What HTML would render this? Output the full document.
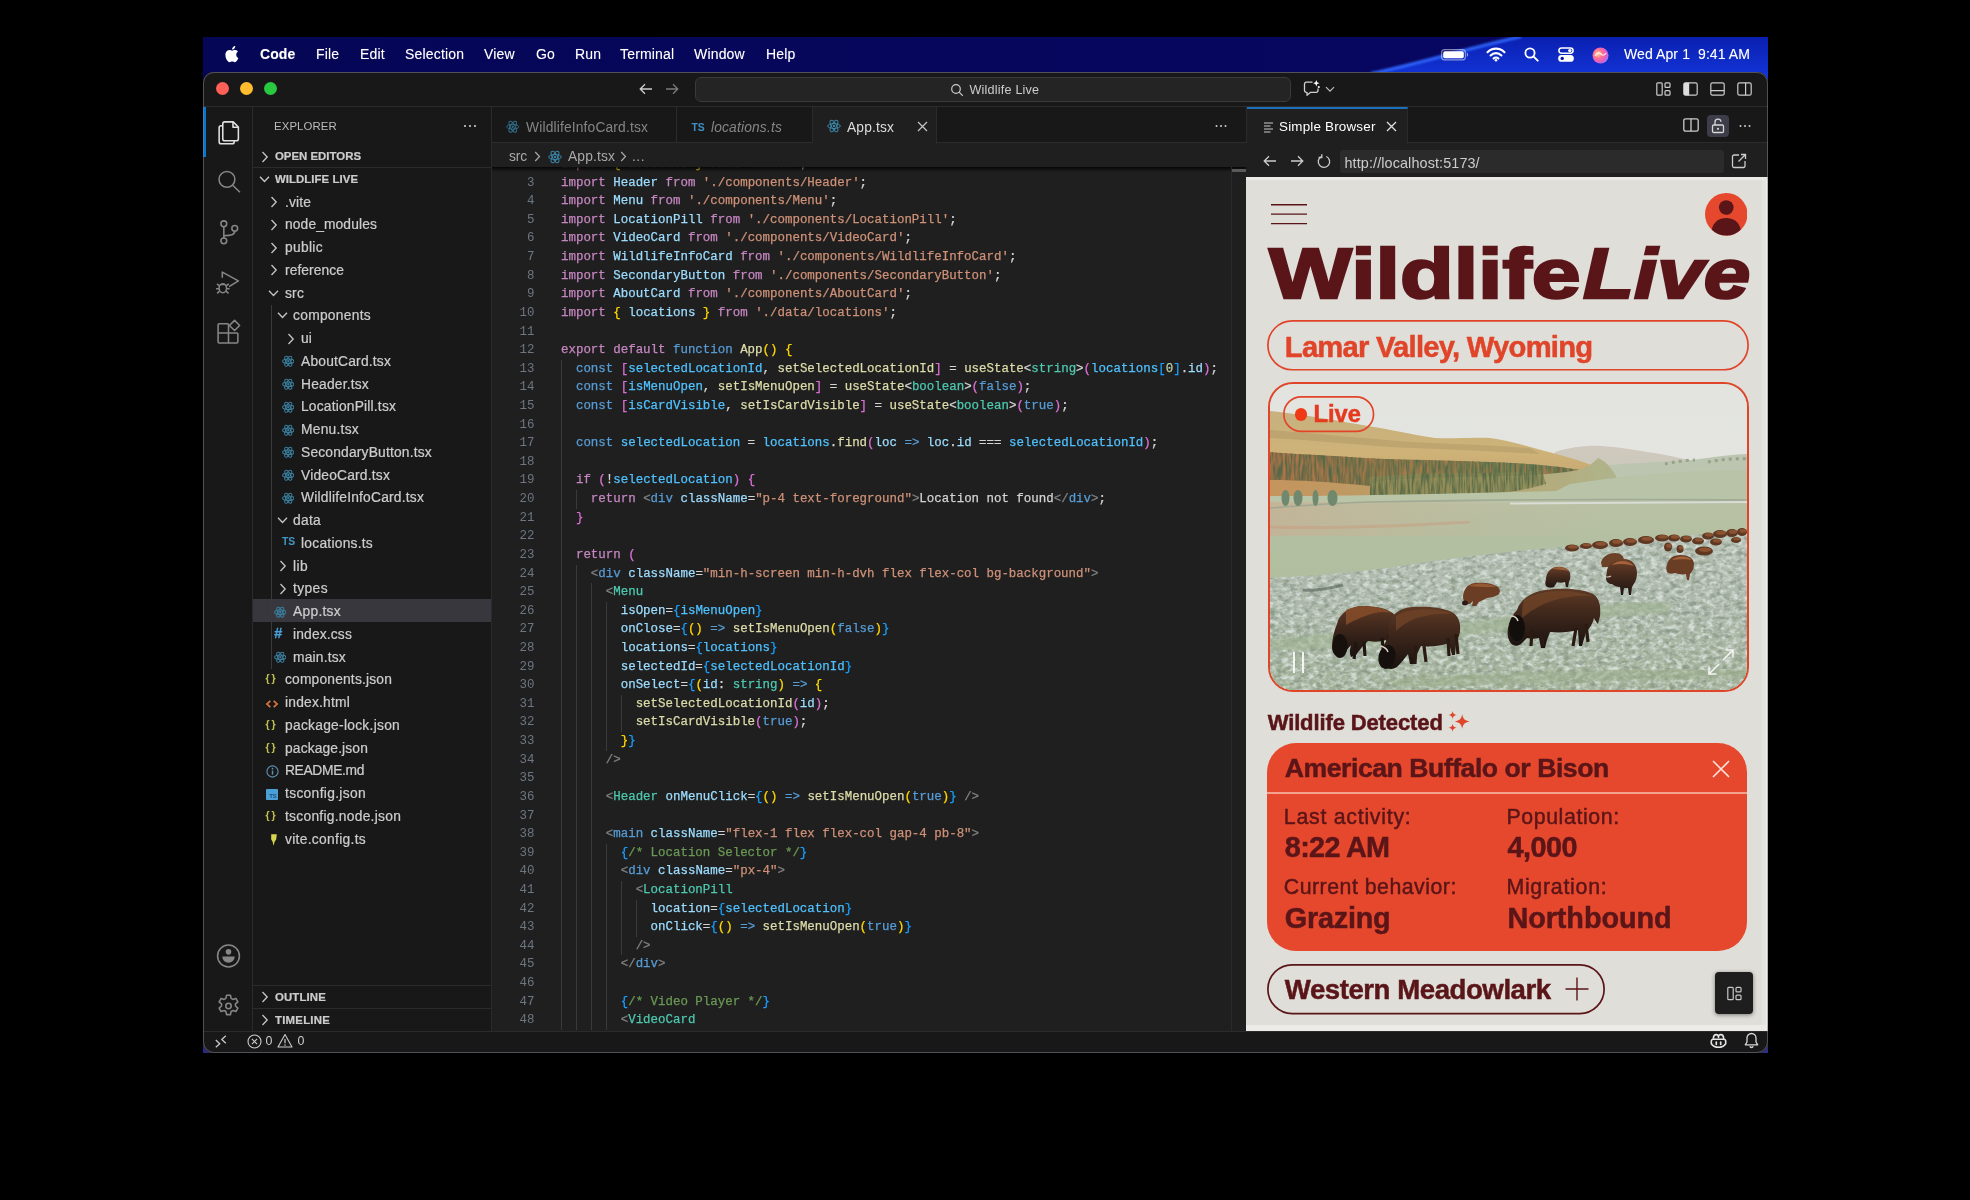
<!DOCTYPE html>
<html lang="en">
<head>
<meta charset="utf-8">
<title>Wildlife Live — Visual Studio Code</title>
<style>
*{box-sizing:border-box;margin:0;padding:0}
html,body{width:1970px;height:1200px;background:#000;overflow:hidden}
body{font-family:"Liberation Sans",sans-serif;color:#ccc;position:relative}
.abs{position:absolute}
#screen{position:absolute;left:203px;top:37px;width:1565px;height:1016px;overflow:hidden;background:linear-gradient(90deg,#060658 0,#060658 72%,#1230cc 86%,#1535d8 100%);will-change:transform}
/* ---------- mac menu bar ---------- */
#menubar{position:absolute;left:0;top:0;width:1565px;height:36px;background:#06064f;color:#fff;font-size:14px;letter-spacing:0}
#menubar span.mi{position:absolute;top:8.5px;line-height:17px;white-space:nowrap;letter-spacing:.18px;text-shadow:0 0 1px rgba(255,255,255,.35)}
#menubar svg{position:absolute}
/* ---------- window ---------- */
#win{position:absolute;left:0;top:35px;width:1565px;height:981px;background:#1f1f1f;border-radius:11px;overflow:hidden;
 box-shadow:0 0 0 1px rgba(120,120,130,.55) inset}
#winborder{position:absolute;left:0;top:35px;width:1565px;height:981px;border-radius:11px;border:1px solid rgba(130,130,140,.55);pointer-events:none;z-index:50}
#titlebar{position:absolute;left:0;top:0;width:1565px;height:35px;background:#181818;border-bottom:1px solid #2b2b2b}
.tl{position:absolute;top:10px;width:13px;height:13px;border-radius:50%}
#cmd{position:absolute;left:491.5px;top:5px;width:596px;height:24.5px;border-radius:6px;background:#242424;border:1px solid #3a3a3a}
#cmd span{position:absolute;left:274px;top:4.500px;font-size:12.600px;letter-spacing:.2px;line-height:15px;color:#ccc;white-space:nowrap}
#titlebar svg{position:absolute}
/* ---------- activity bar ---------- */
#act{position:absolute;left:0;top:35px;width:50px;height:925px;background:#181818;border-right:1px solid #2b2b2b}
#act svg{position:absolute;left:13px}
#act .ind{position:absolute;left:0;top:0;width:2.5px;height:50px;background:#0078d4}
/* ---------- sidebar ---------- */
#side{position:absolute;left:50px;top:35px;width:239px;height:925px;background:#181818;border-right:1px solid #2b2b2b;font-size:13.8px;color:#ccc;overflow:hidden}
#side .hdr{position:absolute;left:21px;top:12px;font-size:11.4px;line-height:14px;color:#bbb;letter-spacing:.1px}
#side .row{position:absolute;left:0;width:238px;height:22.75px;line-height:22.75px;white-space:nowrap}
#side .row span.t{position:absolute;top:1px;-webkit-text-stroke:.22px}
#side .row svg{position:absolute}
#side .sec{font-weight:bold;font-size:11.4px;color:#ccc;letter-spacing:.1px}
#side .row.sec span.t{top:.2px}
#side .sel{background:#37373d}
#side .guide{position:absolute;width:1px;background:#3a3a3a}
.ico-ts{position:absolute;font-size:10.400px;font-weight:bold;color:#4a9fd8;letter-spacing:-.2px}
/* ---------- editor ---------- */
#ed{position:absolute;left:289px;top:35px;width:754px;height:925px;background:#1f1f1f;overflow:hidden}
#tabs{position:absolute;left:0;top:0;width:754px;height:36px;background:#181818;border-bottom:1px solid #2b2b2b}
.tab{position:absolute;top:0;height:36px;border-right:1px solid #2b2b2b;font-size:13.8px;line-height:42px;color:#858585;white-space:nowrap}
.tab.on{background:#1f1f1f;color:#ddd;height:37px}
.tab span.t{position:absolute;top:0}
.tab svg{position:absolute}
#crumbs{position:absolute;left:0;top:36px;width:754px;height:24px;font-size:13.8px;line-height:24px;color:#a9a9a9}
#crumbs span,#crumbs svg{position:absolute;white-space:nowrap}
#code{position:absolute;left:0;top:60px;width:754px;height:865px;overflow:hidden;font-family:"Liberation Mono",monospace;font-size:12.44px;line-height:18.615px;color:#d4d4d4}
#code .ln{position:absolute;left:0;width:754px;height:18.6px;white-space:pre}
#code .ln i{position:absolute;left:0;width:42.5px;text-align:right;color:#6e7681;font-style:normal}
#code .ln b{position:absolute;left:69px;font-weight:normal;-webkit-text-stroke:.25px}
#code .g{position:absolute;width:1px;background:#3a3a3a}
.k{color:#c586c0}.c{color:#569cd6}.v{color:#9cdcfe}.f{color:#dcdcaa}.s{color:#ce9178}.ty{color:#4ec9b0}.m{color:#6a9955}
.b1{color:#ffd700}.b2{color:#da70d6}.b3{color:#179fff}.p{color:#808080}.n{color:#b5cea8}.w{color:#d4d4d4}.q{color:#4fc1ff}
/* ---------- browser ---------- */
#br{position:absolute;left:1043px;top:35px;width:522px;height:925px;background:#1f1f1f;overflow:hidden}
#brtabs{position:absolute;left:0;top:0;width:522px;height:36px;background:#181818;border-bottom:1px solid #2b2b2b;border-left:1px solid #2b2b2b}
#brtab{position:absolute;left:0;top:0;width:161px;height:37px;background:#1f1f1f;border-top:2px solid #1a70bb;border-right:1px solid #2b2b2b;font-size:13.4px;color:#fff}
#brtabs svg,#brnav svg{position:absolute}
#brnav{position:absolute;left:0;top:37px;width:522px;height:34px;background:#1f1f1f}
#url{position:absolute;left:94px;top:6px;width:383.500px;height:22.500px;background:#2b2b2b;border-radius:2px;font-size:14.4px;line-height:26px;color:#ccc;padding-left:4.500px;white-space:nowrap}
#page{position:absolute;left:0;top:70px;width:522px;height:854px;background:#dfded9;overflow:hidden;color:#5a1517}
/* ---------- status ---------- */
#status{position:absolute;left:0;top:958.800px;width:1565px;height:22.200px;background:#181818;border-top:1px solid #2b2b2b;font-size:12.4px;color:#ccc}
#status svg,#status span{position:absolute}
</style>
</head>
<body>
<div id="screen">
<div id="menubar">
 <svg style="left:0;top:0" width="1565" height="36" viewBox="0 0 1565 36"><defs><linearGradient id="mbg" x1="0" y1="0" x2="0" y2="1"><stop offset="0" stop-color="#0a1fb0"/><stop offset="1" stop-color="#1233d4"/></linearGradient><linearGradient id="mbl" x1="0" y1="0" x2="1" y2="0"><stop offset="0" stop-color="#060656"/><stop offset="1" stop-color="#070764"/></linearGradient><filter id="mbb"><feGaussianBlur stdDeviation="1.200"/></filter></defs><rect width="1565" height="36" fill="url(#mbl)"/><path d="M1172 36C1215 27 1262 12 1318 0H1565V36z" fill="url(#mbg)"/><path d="M1168 36.500C1215 27 1262 12 1318 -.5" fill="none" stroke="#2f66ff" stroke-width="3" filter="url(#mbb)"/></svg>
 <svg style="left:21px;top:8px" width="15" height="18" viewBox="0 0 15 18"><path fill="#fff" d="M12.3 9.6c0-2 1.6-2.9 1.7-3-0.9-1.4-2.4-1.6-2.9-1.6-1.2-.1-2.4.7-3 .7-.6 0-1.6-.7-2.6-.7C4.100 5 2.800 5.800 2.100 7 .7 9.500 1.700 13.200 3.100 15.200c.7 1 1.500 2.100 2.500 2 1-.04 1.400-.65 2.600-.65s1.600.65 2.600.63c1.100-.02 1.800-1 2.400-2 .8-1.100 1.100-2.200 1.100-2.300-.02-.01-2.100-.8-2.100-3.200zM10.400 3.500c.55-.67.92-1.600.82-2.500-.8.03-1.750.53-2.300 1.200-.5.600-.95 1.500-.83 2.400.88.070 1.770-.450 2.310-1.100z"/></svg>
 <span class="mi" style="left:57px;font-weight:bold;letter-spacing:.1px">Code</span>
 <span class="mi" style="left:113px">File</span>
 <span class="mi" style="left:157px">Edit</span>
 <span class="mi" style="left:202px">Selection</span>
 <span class="mi" style="left:281px">View</span>
 <span class="mi" style="left:333px">Go</span>
 <span class="mi" style="left:372px">Run</span>
 <span class="mi" style="left:417px">Terminal</span>
 <span class="mi" style="left:491px">Window</span>
 <span class="mi" style="left:563px">Help</span>
 <!-- battery -->
 <svg style="left:1237.500px;top:12px" width="28" height="12" viewBox="0 0 28 12"><rect x=".6" y=".6" width="23.800" height="10.300" rx="3" fill="none" stroke="#fff" stroke-opacity=".5" stroke-width="1.100"/><rect x="2.200" y="2.200" width="20.600" height="7.100" rx="1.700" fill="#fff"/><path d="M25.800 3.800v4c.8-.3 1.400-1.100 1.400-2s-.6-1.700-1.400-2z" fill="#fff" fill-opacity=".55"/></svg>
 <!-- wifi -->
 <svg style="left:1283px;top:10px" width="20" height="15" viewBox="0 0 20 15"><g fill="none" stroke="#fff" stroke-linecap="round"><path d="M1.500 5.200a12 12 0 0 1 17 0" stroke-width="2.100"/><path d="M4.600 8.400a7.600 7.600 0 0 1 10.800 0" stroke-width="2.100"/><path d="M7.600 11.500a3.400 3.400 0 0 1 4.800 0" stroke-width="2.100"/></g><circle cx="10" cy="13.300" r="1.300" fill="#fff"/></svg>
 <!-- search -->
 <svg style="left:1321px;top:10px" width="15" height="15" viewBox="0 0 15 15"><circle cx="6" cy="6" r="4.600" fill="none" stroke="#fff" stroke-width="1.800"/><path d="M9.400 9.400l4.300 4.300" stroke="#fff" stroke-width="1.900" stroke-linecap="round"/></svg>
 <!-- control center -->
 <svg style="left:1355px;top:10px" width="16" height="15" viewBox="0 0 16 15"><rect x=".9" y=".9" width="14.200" height="5.400" rx="2.700" fill="none" stroke="#fff" stroke-width="1.500"/><circle cx="11.800" cy="3.600" r="1.700" fill="#fff"/><rect x=".9" y="8.700" width="14.200" height="5.400" rx="2.700" fill="#fff" stroke="#fff" stroke-width="1.500"/><circle cx="4.200" cy="11.400" r="1.700" fill="#0a12a0"/></svg>
 <!-- siri -->
 <svg style="left:1389px;top:9.500px" width="17" height="17" viewBox="0 0 17 17"><defs><radialGradient id="siri" cx=".35" cy=".4" r=".8"><stop offset="0" stop-color="#ffd7a0"/><stop offset=".35" stop-color="#ff6f8e"/><stop offset=".7" stop-color="#d95bd6"/><stop offset="1" stop-color="#5fb7ff"/></radialGradient></defs><circle cx="8.500" cy="8.500" r="8" fill="url(#siri)"/><path d="M3 9c2-3 4-4 6-2s4 1 5-1" fill="none" stroke="#fff" stroke-opacity=".8" stroke-width="1.300"/></svg>
 <span class="mi" style="left:1421px;letter-spacing:.1px">Wed Apr 1&nbsp; 9:41 AM</span>
</div>
<div class="abs" style="left:0;top:1000px;width:14px;height:16px;background:#2a2a78"></div><div class="abs" style="left:1551px;top:1000px;width:14px;height:16px;background:#2f2f80"></div>
<div id="win">
<div id="titlebar">
 <div class="tl" style="left:13px;background:#fe5f57"></div>
 <div class="tl" style="left:36.800px;background:#febc2e"></div>
 <div class="tl" style="left:60.500px;background:#28c840"></div>
 <svg style="left:436px;top:11px" width="14" height="12" viewBox="0 0 14 12"><path d="M13 6H1.500M6 1.200L1.200 6 6 10.800" fill="none" stroke="#ccc" stroke-width="1.300"/></svg>
 <svg style="left:462px;top:11px" width="14" height="12" viewBox="0 0 14 12"><path d="M1 6h11.500M8 1.200L12.800 6 8 10.800" fill="none" stroke="#7a7a7a" stroke-width="1.300"/></svg>
 <div id="cmd">
  <svg style="left:254px;top:4.500px" width="14" height="14" viewBox="0 0 14 14"><circle cx="6" cy="6" r="4.300" fill="none" stroke="#ccc" stroke-width="1.200"/><path d="M9.200 9.200l3.600 3.600" stroke="#ccc" stroke-width="1.200"/></svg>
  <span>Wildlife Live</span>
 </div>
 <!-- copilot chat -->
 <svg style="left:1100px;top:8px" width="19" height="17" viewBox="0 0 19 17"><path d="M9.500 2.200H3.300A1.800 1.800 0 0 0 1.500 4v6.500a1.800 1.800 0 0 0 1.800 1.800H4v3l3.600-3h5.600a1.800 1.800 0 0 0 1.800-1.800V8.500" fill="none" stroke="#d0d0d0" stroke-width="1.300" stroke-linejoin="round"/><path d="M13.300 0l.9 2.300 2.300.9-2.300.9-.9 2.300-.9-2.300-2.300-.9 2.300-.9z" fill="#fff"/><circle cx="15.800" cy="7" r="1.100" fill="#fff"/></svg>
 <svg style="left:1122px;top:14px" width="10" height="7" viewBox="0 0 10 7"><path d="M1 1.200l4 4 4-4" fill="none" stroke="#c0c0c0" stroke-width="1.200"/></svg>
 <!-- layout controls -->
 <svg style="left:1453px;top:10px" width="15" height="14" viewBox="0 0 15 14"><g fill="none" stroke="#ccc" stroke-width="1.200"><rect x=".8" y=".8" width="5.400" height="12.400" rx="1"/><rect x="9" y=".8" width="5" height="4.600" rx="1"/><rect x="9" y="8.600" width="5" height="4.600" rx="1"/></g></svg>
 <svg style="left:1480px;top:10px" width="15" height="14" viewBox="0 0 15 14"><rect x=".8" y=".8" width="13.400" height="12.400" rx="1.800" fill="none" stroke="#ccc" stroke-width="1.200"/><path d="M.8 2.600a1.800 1.800 0 0 1 1.800-1.800H6.200v12.400H2.600A1.800 1.800 0 0 1 .8 11.400z" fill="#ddd"/></svg>
 <svg style="left:1507px;top:10px" width="15" height="14" viewBox="0 0 15 14"><rect x=".8" y=".8" width="13.400" height="12.400" rx="1.800" fill="none" stroke="#ccc" stroke-width="1.200"/><path d="M.8 8.600h13.400" stroke="#ccc" stroke-width="1.200"/></svg>
 <svg style="left:1534px;top:10px" width="15" height="14" viewBox="0 0 15 14"><rect x=".8" y=".8" width="13.400" height="12.400" rx="1.800" fill="none" stroke="#ccc" stroke-width="1.200"/><path d="M8.600 .8v12.400" stroke="#ccc" stroke-width="1.200"/></svg>
</div>
<div id="act">
 <div class="ind"></div>
 <!-- files -->
 <svg style="top:13px" width="25" height="26" viewBox="0 0 24 25"><g fill="none" stroke="#e0e0e0" stroke-width="1.500" stroke-linejoin="round"><path d="M8.500 1.800h8l5 5v11.200a2 2 0 0 1-2 2h-11a2 2 0 0 1-2-2V3.800a2 2 0 0 1 2-2z"/><path d="M16.300 1.800v5.200h5.200"/><path d="M6.500 5.500H5a2 2 0 0 0-2 2v13.300a2 2 0 0 0 2 2h10.500a2 2 0 0 0 2-2v-.8"/></g></svg>
 <!-- search -->
 <svg style="top:62px" width="25" height="26" viewBox="0 0 24 25"><g fill="none" stroke="#868686" stroke-width="1.500"><circle cx="10.500" cy="10" r="7.600"/><path d="M16 15.600l7 6.800"/></g></svg>
 <!-- scm -->
 <svg style="top:112px" width="25" height="26" viewBox="0 0 24 25"><g fill="none" stroke="#868686" stroke-width="1.500"><circle cx="7.500" cy="4.600" r="2.800"/><circle cx="7.500" cy="21" r="2.800"/><circle cx="18" cy="9" r="2.800"/><path d="M7.500 7.400v10.800M18 11.800c0 3.400-3.500 3.900-10.500 4.200"/></g></svg>
 <!-- debug -->
 <svg style="top:163px;left:12px" width="25" height="26" viewBox="0 0 24 25"><g fill="none" stroke="#868686" stroke-width="1.500" stroke-linejoin="round"><path d="M7 7.500V2l15.500 8.500L13.500 16"/><ellipse cx="7.500" cy="17.500" rx="3.600" ry="4.300"/><path d="M4.300 15.200L1.800 13.400M4 18H1M4.400 20.300L2 22.400M10.700 15.200l2.500-1.800M11 18h3M10.600 20.300l2.400 2.100M5.300 14h4.400"/></g></svg>
 <!-- extensions -->
 <svg style="top:212px" width="25" height="26" viewBox="0 0 24 25"><g fill="none" stroke="#868686" stroke-width="1.500" stroke-linejoin="round"><path d="M12 4.500H3a1 1 0 0 0-1 1v16.500a1 1 0 0 0 1 1h17a1 1 0 0 0 1-1v-8.500"/><path d="M2 13.500h19M12 4.500V23"/><path d="M17.800 1.300l4.900 4.900-4.900 4.900-4.900-4.900z"/></g></svg>
 <!-- account -->
 <svg style="top:836px" width="25" height="26" viewBox="0 0 24 25"><g fill="none" stroke="#868686" stroke-width="1.500"><circle cx="12" cy="12.500" r="10.500"/></g><circle cx="12" cy="8.500" r="2.700" fill="#868686"/><path d="M6 13h12a6 6 0 0 1-12 0z" fill="#868686"/></svg>
 <!-- gear -->
 <svg style="top:886px" width="25" height="26" viewBox="0 0 24 25"><g fill="none" stroke="#868686" stroke-width="1.500" stroke-linejoin="round"><circle cx="12" cy="12.500" r="2.600"/><path d="M10.100 2.200h3.800l.6 3 1.700 1 2.900-1 1.900 3.300-2.300 2v2l2.300 2-1.900 3.300-2.900-1-1.700 1-.6 3h-3.800l-.6-3-1.700-1-2.900 1-1.900-3.300 2.300-2v-2l-2.300-2 1.900-3.300 2.900 1 1.700-1z"/></g></svg>
</div>
<div id="side">
<span class="hdr">EXPLORER</span>
<svg class="abs" style="left:210px;top:17px" width="14" height="4" viewBox="0 0 14 4"><circle cx="2" cy="2" r="1.100" fill="#ccc"/><circle cx="7" cy="2" r="1.100" fill="#ccc"/><circle cx="12" cy="2" r="1.100" fill="#ccc"/></svg>
<div class="row sec" style="top:38.12px"><svg style="left:8px;top:5.500px" width="8" height="12" viewBox="0 0 8 12"><path d="M1.500 1l4.700 5-4.700 5" fill="none" stroke="#c5c5c5" stroke-width="1.300"/></svg><span class="t" style="left:22px;letter-spacing:0.01px">OPEN EDITORS</span></div>
<div class="row sec" style="top:60.82px"><svg style="left:6px;top:7px" width="11" height="9" viewBox="0 0 11 9"><path d="M1 1.800l4.500 4.700L10 1.800" fill="none" stroke="#c5c5c5" stroke-width="1.300"/></svg><span class="t" style="left:22px;letter-spacing:0.06px">WILDLIFE LIVE</span></div>
<div class="row" style="top:83.62px"><svg style="left:17px;top:5.500px" width="8" height="12" viewBox="0 0 8 12"><path d="M1.500 1l4.700 5-4.700 5" fill="none" stroke="#c5c5c5" stroke-width="1.300"/></svg><span class="t" style="left:32px;letter-spacing:0.14px">.vite</span></div>
<div class="row" style="top:106.32px"><svg style="left:17px;top:5.500px" width="8" height="12" viewBox="0 0 8 12"><path d="M1.500 1l4.700 5-4.700 5" fill="none" stroke="#c5c5c5" stroke-width="1.300"/></svg><span class="t" style="left:32px;letter-spacing:0.12px">node_modules</span></div>
<div class="row" style="top:129.12px"><svg style="left:17px;top:5.500px" width="8" height="12" viewBox="0 0 8 12"><path d="M1.500 1l4.700 5-4.700 5" fill="none" stroke="#c5c5c5" stroke-width="1.300"/></svg><span class="t" style="left:32px;letter-spacing:0.32px">public</span></div>
<div class="row" style="top:151.82px"><svg style="left:17px;top:5.500px" width="8" height="12" viewBox="0 0 8 12"><path d="M1.500 1l4.700 5-4.700 5" fill="none" stroke="#c5c5c5" stroke-width="1.300"/></svg><span class="t" style="left:32px;letter-spacing:0.08px">reference</span></div>
<div class="row" style="top:174.62px"><svg style="left:15px;top:7px" width="11" height="9" viewBox="0 0 11 9"><path d="M1 1.800l4.500 4.700L10 1.800" fill="none" stroke="#c5c5c5" stroke-width="1.300"/></svg><span class="t" style="left:32px;letter-spacing:0.20px">src</span></div>
<div class="row" style="top:197.32px"><svg style="left:24px;top:7px" width="11" height="9" viewBox="0 0 11 9"><path d="M1 1.800l4.500 4.700L10 1.800" fill="none" stroke="#c5c5c5" stroke-width="1.300"/></svg><span class="t" style="left:40px;letter-spacing:0.28px">components</span></div>
<div class="row" style="top:220.12px"><svg style="left:34px;top:5.500px" width="8" height="12" viewBox="0 0 8 12"><path d="M1.500 1l4.700 5-4.700 5" fill="none" stroke="#c5c5c5" stroke-width="1.300"/></svg><span class="t" style="left:48px;letter-spacing:0.12px">ui</span></div>
<div class="row" style="top:242.82px"><svg style="left:28.8px;top:5.500px" width="12.500" height="12.500" viewBox="0 0 14 14"><g fill="none" stroke="#3b7f9f" stroke-width="1.150"><ellipse cx="7" cy="7" rx="6.300" ry="2.500"/><ellipse cx="7" cy="7" rx="6.300" ry="2.500" transform="rotate(60 7 7)"/><ellipse cx="7" cy="7" rx="6.300" ry="2.500" transform="rotate(120 7 7)"/></g><circle cx="7" cy="7" r="1.300" fill="#3b7f9f"/></svg><span class="t" style="left:48px;letter-spacing:0.20px">AboutCard.tsx</span></div>
<div class="row" style="top:265.62px"><svg style="left:28.8px;top:5.500px" width="12.500" height="12.500" viewBox="0 0 14 14"><g fill="none" stroke="#3b7f9f" stroke-width="1.150"><ellipse cx="7" cy="7" rx="6.300" ry="2.500"/><ellipse cx="7" cy="7" rx="6.300" ry="2.500" transform="rotate(60 7 7)"/><ellipse cx="7" cy="7" rx="6.300" ry="2.500" transform="rotate(120 7 7)"/></g><circle cx="7" cy="7" r="1.300" fill="#3b7f9f"/></svg><span class="t" style="left:48px;letter-spacing:0.20px">Header.tsx</span></div>
<div class="row" style="top:288.32px"><svg style="left:28.8px;top:5.500px" width="12.500" height="12.500" viewBox="0 0 14 14"><g fill="none" stroke="#3b7f9f" stroke-width="1.150"><ellipse cx="7" cy="7" rx="6.300" ry="2.500"/><ellipse cx="7" cy="7" rx="6.300" ry="2.500" transform="rotate(60 7 7)"/><ellipse cx="7" cy="7" rx="6.300" ry="2.500" transform="rotate(120 7 7)"/></g><circle cx="7" cy="7" r="1.300" fill="#3b7f9f"/></svg><span class="t" style="left:48px;letter-spacing:0.19px">LocationPill.tsx</span></div>
<div class="row" style="top:311.12px"><svg style="left:28.8px;top:5.500px" width="12.500" height="12.500" viewBox="0 0 14 14"><g fill="none" stroke="#3b7f9f" stroke-width="1.150"><ellipse cx="7" cy="7" rx="6.300" ry="2.500"/><ellipse cx="7" cy="7" rx="6.300" ry="2.500" transform="rotate(60 7 7)"/><ellipse cx="7" cy="7" rx="6.300" ry="2.500" transform="rotate(120 7 7)"/></g><circle cx="7" cy="7" r="1.300" fill="#3b7f9f"/></svg><span class="t" style="left:48px;letter-spacing:0.25px">Menu.tsx</span></div>
<div class="row" style="top:333.82px"><svg style="left:28.8px;top:5.500px" width="12.500" height="12.500" viewBox="0 0 14 14"><g fill="none" stroke="#3b7f9f" stroke-width="1.150"><ellipse cx="7" cy="7" rx="6.300" ry="2.500"/><ellipse cx="7" cy="7" rx="6.300" ry="2.500" transform="rotate(60 7 7)"/><ellipse cx="7" cy="7" rx="6.300" ry="2.500" transform="rotate(120 7 7)"/></g><circle cx="7" cy="7" r="1.300" fill="#3b7f9f"/></svg><span class="t" style="left:48px;letter-spacing:0.19px">SecondaryButton.tsx</span></div>
<div class="row" style="top:356.62px"><svg style="left:28.8px;top:5.500px" width="12.500" height="12.500" viewBox="0 0 14 14"><g fill="none" stroke="#3b7f9f" stroke-width="1.150"><ellipse cx="7" cy="7" rx="6.300" ry="2.500"/><ellipse cx="7" cy="7" rx="6.300" ry="2.500" transform="rotate(60 7 7)"/><ellipse cx="7" cy="7" rx="6.300" ry="2.500" transform="rotate(120 7 7)"/></g><circle cx="7" cy="7" r="1.300" fill="#3b7f9f"/></svg><span class="t" style="left:48px;letter-spacing:0.20px">VideoCard.tsx</span></div>
<div class="row" style="top:379.32px"><svg style="left:28.8px;top:5.500px" width="12.500" height="12.500" viewBox="0 0 14 14"><g fill="none" stroke="#3b7f9f" stroke-width="1.150"><ellipse cx="7" cy="7" rx="6.300" ry="2.500"/><ellipse cx="7" cy="7" rx="6.300" ry="2.500" transform="rotate(60 7 7)"/><ellipse cx="7" cy="7" rx="6.300" ry="2.500" transform="rotate(120 7 7)"/></g><circle cx="7" cy="7" r="1.300" fill="#3b7f9f"/></svg><span class="t" style="left:48px;letter-spacing:0.21px">WildlifeInfoCard.tsx</span></div>
<div class="row" style="top:402.12px"><svg style="left:24px;top:7px" width="11" height="9" viewBox="0 0 11 9"><path d="M1 1.800l4.500 4.700L10 1.800" fill="none" stroke="#c5c5c5" stroke-width="1.300"/></svg><span class="t" style="left:40px;letter-spacing:0.29px">data</span></div>
<div class="row" style="top:424.83px"><span class="ico-ts" style="left:29px;top:-.5px;color:#4596c4">TS</span><span class="t" style="left:48px;letter-spacing:0.25px">locations.ts</span></div>
<div class="row" style="top:447.62px"><svg style="left:26px;top:5.500px" width="8" height="12" viewBox="0 0 8 12"><path d="M1.500 1l4.700 5-4.700 5" fill="none" stroke="#c5c5c5" stroke-width="1.300"/></svg><span class="t" style="left:40px;letter-spacing:0.40px">lib</span></div>
<div class="row" style="top:470.33px"><svg style="left:26px;top:5.500px" width="8" height="12" viewBox="0 0 8 12"><path d="M1.500 1l4.700 5-4.700 5" fill="none" stroke="#c5c5c5" stroke-width="1.300"/></svg><span class="t" style="left:40px;letter-spacing:0.40px">types</span></div>
<div class="abs sel" style="left:0;top:492.12px;width:238px;height:22.750px"></div>
<div class="row" style="top:493.12px"><svg style="left:20.8px;top:5.500px" width="12.500" height="12.500" viewBox="0 0 14 14"><g fill="none" stroke="#3b7f9f" stroke-width="1.150"><ellipse cx="7" cy="7" rx="6.300" ry="2.500"/><ellipse cx="7" cy="7" rx="6.300" ry="2.500" transform="rotate(60 7 7)"/><ellipse cx="7" cy="7" rx="6.300" ry="2.500" transform="rotate(120 7 7)"/></g><circle cx="7" cy="7" r="1.300" fill="#3b7f9f"/></svg><span class="t" style="left:40px;letter-spacing:0.28px">App.tsx</span></div>
<div class="row" style="top:515.83px"><span class="abs" style="left:21px;top:-.5px;font-size:14.500px;font-weight:bold;font-style:italic;color:#4a9fd8;-webkit-text-stroke:.3px #4a9fd8">#</span><span class="t" style="left:40px;letter-spacing:0.16px">index.css</span></div>
<div class="row" style="top:538.62px"><svg style="left:20.8px;top:5.500px" width="12.500" height="12.500" viewBox="0 0 14 14"><g fill="none" stroke="#3b7f9f" stroke-width="1.150"><ellipse cx="7" cy="7" rx="6.300" ry="2.500"/><ellipse cx="7" cy="7" rx="6.300" ry="2.500" transform="rotate(60 7 7)"/><ellipse cx="7" cy="7" rx="6.300" ry="2.500" transform="rotate(120 7 7)"/></g><circle cx="7" cy="7" r="1.300" fill="#3b7f9f"/></svg><span class="t" style="left:40px;letter-spacing:0.20px">main.tsx</span></div>
<div class="row" style="top:561.33px"><span class="abs" style="left:12.5px;top:-1px;font-size:10.500px;font-weight:bold;color:#c4c452;letter-spacing:1.800px">{}</span><span class="t" style="left:32px;letter-spacing:0.18px">components.json</span></div>
<div class="row" style="top:584.12px"><svg style="left:13px;top:8.500px" width="12" height="8" viewBox="0 0 12 8"><path d="M4.300 .8L1 4l3.300 3.200M7.700 .8L11 4 7.700 7.200" fill="none" stroke="#d9783c" stroke-width="1.700"/></svg><span class="t" style="left:32px;letter-spacing:0.21px">index.html</span></div>
<div class="row" style="top:606.83px"><span class="abs" style="left:12.5px;top:-1px;font-size:10.500px;font-weight:bold;color:#c4c452;letter-spacing:1.800px">{}</span><span class="t" style="left:32px;letter-spacing:0.27px">package-lock.json</span></div>
<div class="row" style="top:629.62px"><span class="abs" style="left:12.5px;top:-1px;font-size:10.500px;font-weight:bold;color:#c4c452;letter-spacing:1.800px">{}</span><span class="t" style="left:32px;letter-spacing:0.14px">package.json</span></div>
<div class="row" style="top:652.33px"><svg style="left:12.5px;top:6px" width="13" height="13" viewBox="0 0 13 13"><circle cx="6.500" cy="6.500" r="5.600" fill="none" stroke="#5d93b3" stroke-width="1.100"/><path d="M6.500 5.600v4" stroke="#5d93b3" stroke-width="1.400"/><circle cx="6.500" cy="3.700" r=".85" fill="#5d93b3"/></svg><span class="t" style="left:32px;letter-spacing:-0.34px">README.md</span></div>
<div class="row" style="top:675.12px"><svg style="left:13px;top:7px" width="12" height="11" viewBox="0 0 12 11"><rect width="12" height="11" rx=".8" fill="#4a9fd6"/><text x="7" y="9.300" font-family="Liberation Sans" font-size="6" font-weight="bold" fill="#1d4f78" text-anchor="middle">TS</text></svg><span class="t" style="left:32px;letter-spacing:0.33px">tsconfig.json</span></div>
<div class="row" style="top:697.83px"><span class="abs" style="left:12.5px;top:-1px;font-size:10.500px;font-weight:bold;color:#c4c452;letter-spacing:1.800px">{}</span><span class="t" style="left:32px;letter-spacing:0.27px">tsconfig.node.json</span></div>
<div class="row" style="top:720.62px"><svg style="left:16.5px;top:6.500px" width="8" height="12" viewBox="0 0 8 12"><path d="M1.200 .3h5.600l-.6 5.200L4.700 7.500 3.600 11.700 2.500 7.500 1.200 5.500z" fill="#d6d64e"/></svg><span class="t" style="left:32px;letter-spacing:0.31px">vite.config.ts</span></div>
<div class="row sec" style="top:878.92px"><svg style="left:8px;top:5.500px" width="8" height="12" viewBox="0 0 8 12"><path d="M1.500 1l4.700 5-4.700 5" fill="none" stroke="#c5c5c5" stroke-width="1.300"/></svg><span class="t" style="left:22px;letter-spacing:0.14px">OUTLINE</span></div>
<div class="row sec" style="top:901.62px"><svg style="left:8px;top:5.500px" width="8" height="12" viewBox="0 0 8 12"><path d="M1.500 1l4.700 5-4.700 5" fill="none" stroke="#c5c5c5" stroke-width="1.300"/></svg><span class="t" style="left:22px;letter-spacing:0.23px">TIMELINE</span></div>
<div class="abs" style="left:0;top:59.500px;width:238px;height:1px;background:#2b2b2b"></div>
<div class="abs" style="left:0;top:877.500px;width:238px;height:1px;background:#2b2b2b"></div>
<div class="abs" style="left:0;top:900.500px;width:238px;height:1px;background:#2b2b2b"></div>
<div class="guide" style="left:17.500px;top:197.500px;height:364px"></div>
</div>
<div id="ed">
<div id="tabs">
<div class="tab" style="left:0;width:184.500px"><svg style="left:13.75px;top:12.75px" width="13.5" height="13.5" viewBox="0 0 14 14"><g fill="none" stroke="#33708c" stroke-width="1"><ellipse cx="7" cy="7" rx="6.300" ry="2.500"/><ellipse cx="7" cy="7" rx="6.300" ry="2.500" transform="rotate(60 7 7)"/><ellipse cx="7" cy="7" rx="6.300" ry="2.500" transform="rotate(120 7 7)"/></g><circle cx="7" cy="7" r="1.200" fill="#33708c"/></svg><span class="t" style="left:34px;letter-spacing:0.16px">WildlifeInfoCard.tsx</span></div>
<div class="tab" style="left:184.500px;width:136.500px"><span class="ico-ts" style="left:15px;top:0;color:#3f8fc4">TS</span><span class="t" style="left:34.500px;font-style:italic;letter-spacing:0.16px">locations.ts</span></div>
<div class="tab on" style="left:321px;width:124px"><svg style="left:14.0px;top:12.0px" width="14" height="14" viewBox="0 0 14 14"><g fill="none" stroke="#3a86a8" stroke-width="1"><ellipse cx="7" cy="7" rx="6.300" ry="2.500"/><ellipse cx="7" cy="7" rx="6.300" ry="2.500" transform="rotate(60 7 7)"/><ellipse cx="7" cy="7" rx="6.300" ry="2.500" transform="rotate(120 7 7)"/></g><circle cx="7" cy="7" r="1.200" fill="#3a86a8"/></svg><span class="t" style="left:34px;letter-spacing:0.14px">App.tsx</span><svg style="left:103.500px;top:13.500px" width="11" height="11" viewBox="0 0 11 11"><path d="M1 1l9 9M10 1l-9 9" fill="none" stroke="#c5c5c5" stroke-width="1.200"/></svg></div>
<svg class="abs" style="left:723px;top:17px" width="12" height="4" viewBox="0 0 12 4"><circle cx="1.500" cy="2" r="1" fill="#ccc"/><circle cx="6" cy="2" r="1" fill="#ccc"/><circle cx="10.500" cy="2" r="1" fill="#ccc"/></svg>
</div>
<div id="crumbs">
<span style="left:17px;top:2px;letter-spacing:-0.14px">src</span>
<svg style="left:41.500px;top:8px" width="7" height="11" viewBox="0 0 7 11"><path d="M1.200 1l4.300 4.500L1.200 10" fill="none" stroke="#a9a9a9" stroke-width="1.200"/></svg>
<svg style="position:absolute;left:56.0px;top:6.5px" width="14" height="14" viewBox="0 0 14 14"><g fill="none" stroke="#3a86a8" stroke-width="1"><ellipse cx="7" cy="7" rx="6.300" ry="2.500"/><ellipse cx="7" cy="7" rx="6.300" ry="2.500" transform="rotate(60 7 7)"/><ellipse cx="7" cy="7" rx="6.300" ry="2.500" transform="rotate(120 7 7)"/></g><circle cx="7" cy="7" r="1.200" fill="#3a86a8"/></svg>
<span style="left:76px;top:2px;letter-spacing:0.14px">App.tsx</span>
<svg style="left:128px;top:8px" width="7" height="11" viewBox="0 0 7 11"><path d="M1.200 1l4.300 4.500L1.200 10" fill="none" stroke="#a9a9a9" stroke-width="1.200"/></svg>
<span style="left:140px;top:2px;letter-spacing:.5px">...</span>
</div>
<div id="code">
<div class="ln" style="top:-12.01px"><i>2</i><b><span class="k">import</span><span class="w"> </span><span class="b1">{</span><span class="w"> </span><span class="v">useState</span><span class="w"> </span><span class="b1">}</span><span class="w"> </span><span class="k">from</span><span class="w"> </span><span class="s">'react'</span><span class="w">;</span></b></div>
<div class="ln" style="top:6.60px"><i>3</i><b><span class="k">import</span><span class="w"> </span><span class="v">Header</span><span class="w"> </span><span class="k">from</span><span class="w"> </span><span class="s">'./components/Header'</span><span class="w">;</span></b></div>
<div class="ln" style="top:25.21px"><i>4</i><b><span class="k">import</span><span class="w"> </span><span class="v">Menu</span><span class="w"> </span><span class="k">from</span><span class="w"> </span><span class="s">'./components/Menu'</span><span class="w">;</span></b></div>
<div class="ln" style="top:43.83px"><i>5</i><b><span class="k">import</span><span class="w"> </span><span class="v">LocationPill</span><span class="w"> </span><span class="k">from</span><span class="w"> </span><span class="s">'./components/LocationPill'</span><span class="w">;</span></b></div>
<div class="ln" style="top:62.45px"><i>6</i><b><span class="k">import</span><span class="w"> </span><span class="v">VideoCard</span><span class="w"> </span><span class="k">from</span><span class="w"> </span><span class="s">'./components/VideoCard'</span><span class="w">;</span></b></div>
<div class="ln" style="top:81.06px"><i>7</i><b><span class="k">import</span><span class="w"> </span><span class="v">WildlifeInfoCard</span><span class="w"> </span><span class="k">from</span><span class="w"> </span><span class="s">'./components/WildlifeInfoCard'</span><span class="w">;</span></b></div>
<div class="ln" style="top:99.67px"><i>8</i><b><span class="k">import</span><span class="w"> </span><span class="v">SecondaryButton</span><span class="w"> </span><span class="k">from</span><span class="w"> </span><span class="s">'./components/SecondaryButton'</span><span class="w">;</span></b></div>
<div class="ln" style="top:118.29px"><i>9</i><b><span class="k">import</span><span class="w"> </span><span class="v">AboutCard</span><span class="w"> </span><span class="k">from</span><span class="w"> </span><span class="s">'./components/AboutCard'</span><span class="w">;</span></b></div>
<div class="ln" style="top:136.90px"><i>10</i><b><span class="k">import</span><span class="w"> </span><span class="b1">{</span><span class="w"> </span><span class="v">locations</span><span class="w"> </span><span class="b1">}</span><span class="w"> </span><span class="k">from</span><span class="w"> </span><span class="s">'./data/locations'</span><span class="w">;</span></b></div>
<div class="ln" style="top:155.52px"><i>11</i><b></b></div>
<div class="ln" style="top:174.13px"><i>12</i><b><span class="k">export default</span><span class="w"> </span><span class="c">function</span><span class="w"> </span><span class="f">App</span><span class="b1">()</span><span class="w"> </span><span class="b1">{</span></b></div>
<div class="ln" style="top:192.75px"><i>13</i><b>  <span class="c">const</span><span class="w"> </span><span class="b2">[</span><span class="q">selectedLocationId</span><span class="w">, </span><span class="f">setSelectedLocationId</span><span class="b2">]</span><span class="w"> = </span><span class="f">useState</span><span class="w">&lt;</span><span class="ty">string</span><span class="w">&gt;</span><span class="b2">(</span><span class="q">locations</span><span class="b3">[</span><span class="n">0</span><span class="b3">]</span><span class="w">.</span><span class="v">id</span><span class="b2">)</span><span class="w">;</span></b></div>
<div class="ln" style="top:211.36px"><i>14</i><b>  <span class="c">const</span><span class="w"> </span><span class="b2">[</span><span class="q">isMenuOpen</span><span class="w">, </span><span class="f">setIsMenuOpen</span><span class="b2">]</span><span class="w"> = </span><span class="f">useState</span><span class="w">&lt;</span><span class="ty">boolean</span><span class="w">&gt;</span><span class="b2">(</span><span class="c">false</span><span class="b2">)</span><span class="w">;</span></b></div>
<div class="ln" style="top:229.98px"><i>15</i><b>  <span class="c">const</span><span class="w"> </span><span class="b2">[</span><span class="q">isCardVisible</span><span class="w">, </span><span class="f">setIsCardVisible</span><span class="b2">]</span><span class="w"> = </span><span class="f">useState</span><span class="w">&lt;</span><span class="ty">boolean</span><span class="w">&gt;</span><span class="b2">(</span><span class="c">true</span><span class="b2">)</span><span class="w">;</span></b></div>
<div class="ln" style="top:248.59px"><i>16</i><b></b></div>
<div class="ln" style="top:267.21px"><i>17</i><b>  <span class="c">const</span><span class="w"> </span><span class="q">selectedLocation</span><span class="w"> = </span><span class="q">locations</span><span class="w">.</span><span class="f">find</span><span class="b2">(</span><span class="v">loc</span><span class="w"> </span><span class="c">=&gt;</span><span class="w"> </span><span class="v">loc</span><span class="w">.</span><span class="v">id</span><span class="w"> === </span><span class="q">selectedLocationId</span><span class="b2">)</span><span class="w">;</span></b></div>
<div class="ln" style="top:285.82px"><i>18</i><b></b></div>
<div class="ln" style="top:304.44px"><i>19</i><b>  <span class="k">if</span><span class="w"> </span><span class="b2">(</span><span class="w">!</span><span class="q">selectedLocation</span><span class="b2">)</span><span class="w"> </span><span class="b2">{</span></b></div>
<div class="ln" style="top:323.06px"><i>20</i><b>    <span class="k">return</span><span class="w"> </span><span class="p">&lt;</span><span class="c">div</span><span class="w"> </span><span class="v">className</span><span class="w">=</span><span class="s">"p-4 text-foreground"</span><span class="p">&gt;</span><span class="w">Location not found</span><span class="p">&lt;/</span><span class="c">div</span><span class="p">&gt;</span><span class="w">;</span></b></div>
<div class="ln" style="top:341.67px"><i>21</i><b>  <span class="b2">}</span></b></div>
<div class="ln" style="top:360.28px"><i>22</i><b></b></div>
<div class="ln" style="top:378.90px"><i>23</i><b>  <span class="k">return</span><span class="w"> </span><span class="b2">(</span></b></div>
<div class="ln" style="top:397.51px"><i>24</i><b>    <span class="p">&lt;</span><span class="c">div</span><span class="w"> </span><span class="v">className</span><span class="w">=</span><span class="s">"min-h-screen min-h-dvh flex flex-col bg-background"</span><span class="p">&gt;</span></b></div>
<div class="ln" style="top:416.13px"><i>25</i><b>      <span class="p">&lt;</span><span class="ty">Menu</span></b></div>
<div class="ln" style="top:434.75px"><i>26</i><b>        <span class="v">isOpen</span><span class="w">=</span><span class="b3">{</span><span class="q">isMenuOpen</span><span class="b3">}</span></b></div>
<div class="ln" style="top:453.36px"><i>27</i><b>        <span class="v">onClose</span><span class="w">=</span><span class="b3">{</span><span class="b1">()</span><span class="w"> </span><span class="c">=&gt;</span><span class="w"> </span><span class="f">setIsMenuOpen</span><span class="b1">(</span><span class="c">false</span><span class="b1">)</span><span class="b3">}</span></b></div>
<div class="ln" style="top:471.97px"><i>28</i><b>        <span class="v">locations</span><span class="w">=</span><span class="b3">{</span><span class="q">locations</span><span class="b3">}</span></b></div>
<div class="ln" style="top:490.59px"><i>29</i><b>        <span class="v">selectedId</span><span class="w">=</span><span class="b3">{</span><span class="q">selectedLocationId</span><span class="b3">}</span></b></div>
<div class="ln" style="top:509.20px"><i>30</i><b>        <span class="v">onSelect</span><span class="w">=</span><span class="b3">{</span><span class="b1">(</span><span class="v">id</span><span class="w">: </span><span class="ty">string</span><span class="b1">)</span><span class="w"> </span><span class="c">=&gt;</span><span class="w"> </span><span class="b1">{</span></b></div>
<div class="ln" style="top:527.82px"><i>31</i><b>          <span class="f">setSelectedLocationId</span><span class="b2">(</span><span class="v">id</span><span class="b2">)</span><span class="w">;</span></b></div>
<div class="ln" style="top:546.43px"><i>32</i><b>          <span class="f">setIsCardVisible</span><span class="b2">(</span><span class="c">true</span><span class="b2">)</span><span class="w">;</span></b></div>
<div class="ln" style="top:565.05px"><i>33</i><b>        <span class="b1">}</span><span class="b3">}</span></b></div>
<div class="ln" style="top:583.66px"><i>34</i><b>      <span class="p">/&gt;</span></b></div>
<div class="ln" style="top:602.28px"><i>35</i><b></b></div>
<div class="ln" style="top:620.89px"><i>36</i><b>      <span class="p">&lt;</span><span class="ty">Header</span><span class="w"> </span><span class="v">onMenuClick</span><span class="w">=</span><span class="b3">{</span><span class="b1">()</span><span class="w"> </span><span class="c">=&gt;</span><span class="w"> </span><span class="f">setIsMenuOpen</span><span class="b1">(</span><span class="c">true</span><span class="b1">)</span><span class="b3">}</span><span class="w"> </span><span class="p">/&gt;</span></b></div>
<div class="ln" style="top:639.51px"><i>37</i><b></b></div>
<div class="ln" style="top:658.12px"><i>38</i><b>      <span class="p">&lt;</span><span class="c">main</span><span class="w"> </span><span class="v">className</span><span class="w">=</span><span class="s">"flex-1 flex flex-col gap-4 pb-8"</span><span class="p">&gt;</span></b></div>
<div class="ln" style="top:676.74px"><i>39</i><b>        <span class="b3">{</span><span class="m">/* Location Selector */</span><span class="b3">}</span></b></div>
<div class="ln" style="top:695.36px"><i>40</i><b>        <span class="p">&lt;</span><span class="c">div</span><span class="w"> </span><span class="v">className</span><span class="w">=</span><span class="s">"px-4"</span><span class="p">&gt;</span></b></div>
<div class="ln" style="top:713.97px"><i>41</i><b>          <span class="p">&lt;</span><span class="ty">LocationPill</span></b></div>
<div class="ln" style="top:732.58px"><i>42</i><b>            <span class="v">location</span><span class="w">=</span><span class="b3">{</span><span class="q">selectedLocation</span><span class="b3">}</span></b></div>
<div class="ln" style="top:751.20px"><i>43</i><b>            <span class="v">onClick</span><span class="w">=</span><span class="b3">{</span><span class="b1">()</span><span class="w"> </span><span class="c">=&gt;</span><span class="w"> </span><span class="f">setIsMenuOpen</span><span class="b1">(</span><span class="c">true</span><span class="b1">)</span><span class="b3">}</span></b></div>
<div class="ln" style="top:769.81px"><i>44</i><b>          <span class="p">/&gt;</span></b></div>
<div class="ln" style="top:788.43px"><i>45</i><b>        <span class="p">&lt;/</span><span class="c">div</span><span class="p">&gt;</span></b></div>
<div class="ln" style="top:807.04px"><i>46</i><b></b></div>
<div class="ln" style="top:825.66px"><i>47</i><b>        <span class="b3">{</span><span class="m">/* Video Player */</span><span class="b3">}</span></b></div>
<div class="ln" style="top:844.27px"><i>48</i><b>        <span class="p">&lt;</span><span class="ty">VideoCard</span></b></div>
<div class="g" style="left:69.00px;top:192.75px;height:670.14px"></div>
<div class="g" style="left:83.93px;top:323.06px;height:18.61px"></div>
<div class="g" style="left:83.93px;top:397.51px;height:465.37px"></div>
<div class="g" style="left:98.86px;top:416.13px;height:446.76px"></div>
<div class="g" style="left:113.79px;top:434.75px;height:148.92px"></div>
<div class="g" style="left:113.79px;top:676.74px;height:186.15px"></div>
<div class="g" style="left:128.72px;top:527.82px;height:37.23px"></div>
<div class="g" style="left:128.72px;top:713.97px;height:74.46px"></div>
<div class="g" style="left:143.65px;top:732.58px;height:37.23px"></div>
</div>
<div class="abs" style="left:0;top:60px;width:754px;height:5px;background:linear-gradient(#000c,#0000)"></div>
<div class="abs" style="left:739px;top:60px;width:1px;height:865px;background:#2b2b2b"></div>
<div class="abs" style="left:740px;top:62px;width:14px;height:3px;background:#5a5a5a"></div>
</div>
<div id="br">
<div id="brtabs"><div id="brtab">
<svg style="left:17px;top:13px" width="10" height="11" viewBox="0 0 10 11"><path d="M0 1h9M0 4h6.500M0 7h9M0 10h6.500" stroke="#ccc" stroke-width="1.200"/></svg>
<span class="abs" style="left:32px;top:0;line-height:35px;white-space:nowrap;letter-spacing:0.20px">Simple Browser</span>
<svg style="left:138.500px;top:11.500px" width="11" height="11" viewBox="0 0 11 11"><path d="M1 1l9 9M10 1l-9 9" fill="none" stroke="#e0e0e0" stroke-width="1.300"/></svg>
</div>
<svg style="left:436px;top:11px" width="16" height="14" viewBox="0 0 16 14"><rect x=".8" y=".8" width="14.400" height="12.400" rx="1.800" fill="none" stroke="#ccc" stroke-width="1.300"/><path d="M8 .8v12.400" stroke="#ccc" stroke-width="1.300"/></svg>
<div class="abs" style="left:460px;top:7.500px;width:22px;height:22px;border-radius:4px;background:#3d3d4a"></div>
<svg style="left:464px;top:10.500px" width="14" height="16" viewBox="0 0 14 16"><rect x="1.500" y="7" width="11" height="7.500" rx="1.300" fill="none" stroke="#d8d8d8" stroke-width="1.300"/><path d="M4 7V4.300a3 3 0 0 1 6-.5" fill="none" stroke="#d8d8d8" stroke-width="1.300"/><circle cx="7" cy="10.800" r="1.100" fill="#d8d8d8"/></svg>
<svg style="left:492px;top:17px" width="12" height="4" viewBox="0 0 12 4"><circle cx="1.500" cy="2" r="1" fill="#ccc"/><circle cx="6" cy="2" r="1" fill="#ccc"/><circle cx="10.500" cy="2" r="1" fill="#ccc"/></svg>
</div>
<div id="brnav">
<svg style="left:17px;top:11px" width="14" height="12" viewBox="0 0 14 12"><path d="M13 6H1.500M6 1.200L1.200 6 6 10.800" fill="none" stroke="#ccc" stroke-width="1.300"/></svg>
<svg style="left:44px;top:11px" width="14" height="12" viewBox="0 0 14 12"><path d="M1 6h11.500M8 1.200L12.800 6 8 10.800" fill="none" stroke="#ccc" stroke-width="1.300"/></svg>
<svg style="left:71px;top:9.500px" width="14" height="15" viewBox="0 0 14 15"><path d="M4.200 2.700A5.700 5.700 0 1 0 9.300 2.500" fill="none" stroke="#ccc" stroke-width="1.300"/><path d="M4.800 .3v3.200H1.600" fill="none" stroke="#ccc" stroke-width="1.300"/></svg>
<div id="url"><span style="letter-spacing:0.11px">http://localhost:5173/</span></div>
<svg style="left:485px;top:9px" width="16" height="16" viewBox="0 0 16 16"><path d="M8 2H3a1.500 1.500 0 0 0-1.500 1.500v9.500A1.500 1.500 0 0 0 3 14.500h9.500A1.500 1.500 0 0 0 14 13V8" fill="none" stroke="#ccc" stroke-width="1.300"/><path d="M10 1.500h4.500V6M14.500 1.500L7.500 8.500" fill="none" stroke="#ccc" stroke-width="1.300"/></svg>
</div>
<div id="page">
<svg class="abs" style="left:24.700000000000045px;top:23px" width="37" height="28" viewBox="0 0 37 28"><path d="M0 4.700h36M0 14.100h36M0 23.600h36" stroke="#5a1518" stroke-width="1.450"/></svg>
<svg class="abs" style="left:458.5px;top:16.2px" width="42.500" height="42.500" viewBox="0 0 42.500 42.500"><defs><clipPath id="avc"><circle cx="21.250" cy="21.250" r="21.250"/></clipPath></defs><circle cx="21.250" cy="21.250" r="21.250" fill="#e5482d"/><g clip-path="url(#avc)" fill="#5a1518"><circle cx="21.250" cy="14.500" r="7.300"/><path d="M6.500 40c0-9 6-15 14.750-15S36 31 36 40v4H6.500z"/></g></svg>
<span class="abs" style="left:22.7px;top:62.3px;font:bold 70.2px/70.2px 'Liberation Sans',sans-serif;color:#5a1518;white-space:nowrap;transform-origin:0 0;transform:scaleX(1.2519);letter-spacing:0;-webkit-text-stroke:2.400px #5a1518">Wildlife</span>
<span class="abs" style="left:336.7px;top:62.3px;font:italic bold 70.2px/70.2px 'Liberation Sans',sans-serif;color:#5a1518;white-space:nowrap;transform-origin:0 0;transform:scaleX(1.1907);-webkit-text-stroke:2.400px #5a1518">Live</span>
<svg class="abs" style="left:20.1px;top:141.8px" width="484.0" height="52.6" viewBox="-1 -1 484.0 52.6"><rect x="0.85" y="0.85" width="480.3" height="48.9" rx="24.4" fill="none" stroke="#e0452a" stroke-width="1.7"/></svg>
<span class="abs" style="left:38.8px;top:156.0px;font:bold 29.2px/29.2px 'Liberation Sans',sans-serif;letter-spacing:-0.75px;color:#e0452a;white-space:nowrap;-webkit-text-stroke:0.5px #e0452a">Lamar Valley, Wyoming</span>
<div class="abs" id="vid" style="left:21.7px;top:205.3px;width:481px;height:309.500px;border:2px solid #e0452a;border-radius:25px;overflow:hidden;background:#a9b79b">
<svg class="abs" style="left:0;top:0" width="478" height="306" viewBox="0 0 478 306">
<defs>
<linearGradient id="pgSky" x1="0" y1="0" x2="0" y2="1"><stop offset="0" stop-color="#e3e5e2"/><stop offset="1" stop-color="#ebe8e0"/></linearGradient>
<linearGradient id="pgHill" x1="0" y1="0" x2="0" y2="1"><stop offset="0" stop-color="#c3a972"/><stop offset=".45" stop-color="#cbab69"/><stop offset="1" stop-color="#b8915a"/></linearGradient>
<linearGradient id="pgTree" x1="0" y1="0" x2="1" y2="0"><stop offset="0" stop-color="#8f5c30"/><stop offset=".35" stop-color="#7d6633"/><stop offset=".7" stop-color="#62703c"/><stop offset="1" stop-color="#556b40"/></linearGradient>
<linearGradient id="pgSlope" x1="0" y1="0" x2="1" y2="0"><stop offset="0" stop-color="#c0884a"/><stop offset=".5" stop-color="#b39458"/><stop offset="1" stop-color="#a7ad80"/></linearGradient>
<linearGradient id="pgMead" x1="0" y1="0" x2="0" y2="1"><stop offset="0" stop-color="#b3bc9d"/><stop offset=".3" stop-color="#abba99"/><stop offset="1" stop-color="#a2b28f"/></linearGradient>
<linearGradient id="pgMeadL" x1="0" y1="0" x2="1" y2="0"><stop offset="0" stop-color="#c9a183" stop-opacity=".55"/><stop offset=".5" stop-color="#c4a98a" stop-opacity=".25"/><stop offset="1" stop-color="#c4a98a" stop-opacity="0"/></linearGradient>
<linearGradient id="pgSage" x1="0" y1="0" x2="0" y2="1"><stop offset="0" stop-color="#aebaae"/><stop offset=".5" stop-color="#a3b1a2"/><stop offset="1" stop-color="#98aa8e"/></linearGradient>
<linearGradient id="pgFar" x1="0" y1="0" x2="0" y2="1"><stop offset="0" stop-color="#cdc4bb"/><stop offset="1" stop-color="#c3c6b4"/></linearGradient>
<linearGradient id="pgBis" x1="0" y1="0" x2="0" y2="1"><stop offset="0" stop-color="#6a4028"/><stop offset=".45" stop-color="#452a1d"/><stop offset="1" stop-color="#201613"/></linearGradient>
<linearGradient id="pgBis2" x1="0" y1="0" x2="0" y2="1"><stop offset="0" stop-color="#5f3a25"/><stop offset=".4" stop-color="#40281c"/><stop offset="1" stop-color="#191210"/></linearGradient>
<filter id="pfLight" x="0" y="0" width="100%" height="100%" color-interpolation-filters="sRGB"><feTurbulence type="fractalNoise" baseFrequency=".16 .24" numOctaves="3" seed="4"/><feColorMatrix type="matrix" values="0 0 0 0 .83  0 0 0 0 .87  0 0 0 0 .85  2.6 0 0 0 -1.02"/><feComposite in2="SourceGraphic" operator="in"/></filter>
<filter id="pfDark" x="0" y="0" width="100%" height="100%" color-interpolation-filters="sRGB"><feTurbulence type="fractalNoise" baseFrequency=".15 .22" numOctaves="3" seed="11"/><feColorMatrix type="matrix" values="0 0 0 0 .42  0 0 0 0 .5  0 0 0 0 .43  0 3.2 0 0 -1.5"/><feComposite in2="SourceGraphic" operator="in"/></filter>
<filter id="pfTree" x="0" y="0" width="100%" height="100%" color-interpolation-filters="sRGB"><feTurbulence type="fractalNoise" baseFrequency=".45 .05" numOctaves="2" seed="5"/><feColorMatrix type="matrix" values="0 0 0 0 .24  0 0 0 0 .33  0 0 0 0 .19  2.8 0 0 0 -1.0"/><feComposite in2="SourceGraphic" operator="in"/></filter>
<filter id="pfTreeO" x="0" y="0" width="100%" height="100%" color-interpolation-filters="sRGB"><feTurbulence type="fractalNoise" baseFrequency=".3 .06" numOctaves="2" seed="9"/><feColorMatrix type="matrix" values="0 0 0 0 .74  0 0 0 0 .42  0 0 0 0 .2  0 2.6 0 0 -1.2"/><feComposite in2="SourceGraphic" operator="in"/></filter>
<filter id="pfSoft"><feGaussianBlur stdDeviation=".7"/></filter>
<filter id="pfSoft2"><feGaussianBlur stdDeviation="1.6"/></filter>
</defs>
<rect width="478" height="306" fill="url(#pgSky)"/>
<path d="M285 68C300 63 318 61 332 62s34 4 52 7 30 6 40 8l54-6v40H270z" fill="url(#pgFar)" filter="url(#pfSoft)"/>
<path d="M330 82c30-3 62-4 92-6 20-2 40-6 56-6v60H300z" fill="#b5c0aa"/>
<path d="M395 80c8-2 20-4 30-4M438 78c10-2 26-4 40-3" stroke="#77866e" stroke-width="3" fill="none" stroke-dasharray="3 4" opacity=".7"/>
<path d="M0 27C30 30 70 37 104 43c25 4 45 9 61 11 20 1 40-1 55 0 22 3 40 9 55 13 15 4 30 8 41 12 8 3 16 8 22 14L300 120H0z" fill="url(#pgHill)"/>
<path d="M0 46c40 3 90 8 140 12 40 2 80 3 120 6l10 6c-50-3-100-5-150-7C80 60 40 56 0 54z" fill="#a98d55" opacity=".55"/>
<path d="M0 68c20 2 50 3 80 5 40 3 90 3 140 5 30 1 60 3 90 8 8 2 14 6 18 10-6 6-12 10-20 12-30 6-70 6-110 7-30 1-50 7-70 11H0z" fill="url(#pgTree)"/>
<path d="M0 68c20 2 50 3 80 5 40 3 90 3 140 5 30 1 60 3 90 8 8 2 14 6 18 10-6 6-12 10-20 12-30 6-70 6-110 7-30 1-50 7-70 11H0z" fill="#fff" filter="url(#pfTree)"/>
<path d="M0 68c20 2 50 3 80 5 40 3 90 3 140 5 30 1 60 3 90 8 8 2 14 6 18 10-6 6-12 10-20 12-30 6-70 6-110 7-30 1-50 7-70 11H0z" fill="#fff" filter="url(#pfTreeO)" opacity=".8"/>
<path d="M0 96c30 0 60 2 100 6 0-8 60-8 98-9 40-1 80-1 110-7 8-2 14-6 20-12 10 4 16 14 20 22L330 122H0z" fill="url(#pgSlope)"/>
<path d="M100 93c30-3 70-4 110-4 25 0 45-1 62-3l4 14c-20 6-40 9-66 10-40 1-75 2-110 4z" fill="#7a7a40" opacity=".8"/>
<path d="M100 93c30-3 70-4 110-4 25 0 45-1 62-3l4 14c-20 6-40 9-66 10-40 1-75 2-110 4z" fill="#fff" filter="url(#pfTree)" opacity=".85"/>
<rect y="112" width="478" height="194" fill="url(#pgMead)"/>
<path d="M0 112c80 0 200-3 330-6 50-1 100 0 148 0v14H0z" fill="#b4bf9f"/>
<path d="M300 100c50-8 110-14 178-14v34H260z" fill="#b1bea1"/>
<rect y="118" width="330" height="34" fill="url(#pgMeadL)"/>
<path d="M0 143c60 2 130-1 200-5" stroke="#c58f6e" stroke-width="3" opacity=".45" fill="none" filter="url(#pfSoft)"/>
<path d="M0 124c30-2 60-5 100-6 100-2 250-3 378-2" stroke="#8f9a84" stroke-width="1.600" fill="none" opacity=".8"/>
<path d="M240 119.500c80-1 160-1.500 238-1.500" stroke="#d9dcd6" stroke-width="1.800" fill="none"/>
<ellipse cx="15.5" cy="114" rx="4.0" ry="8" fill="#5d7a5e"/>
<ellipse cx="28.0" cy="114" rx="4.5" ry="8" fill="#5d7a5e"/>
<ellipse cx="45.5" cy="114" rx="3.0" ry="8" fill="#5d7a5e"/>
<ellipse cx="62.5" cy="114" rx="5.0" ry="8" fill="#5d7a5e"/>
<path d="M0 194c40-2 90-6 130-12 60-9 120-16 175-20 50-4 110-10 173-16V306H0z" fill="url(#pgSage)"/>
<path d="M0 194c40-2 90-6 130-12 60-9 120-16 175-20 50-4 110-10 173-16V306H0z" fill="#fff" filter="url(#pfLight)"/>
<path d="M0 194c40-2 90-6 130-12 60-9 120-16 175-20 50-4 110-10 173-16V306H0z" fill="#fff" filter="url(#pfDark)" opacity=".65"/>
<path d="M0 262c60-6 140-10 220-20 60-8 120-18 180-20" stroke="#93aa84" stroke-width="14" fill="none" opacity=".55" filter="url(#pfSoft2)"/>
<path d="M120 300c80-4 200-10 358-12" stroke="#8fa57f" stroke-width="12" fill="none" opacity=".5" filter="url(#pfSoft2)"/>
<rect width="478" height="306" fill="#e6e2d6" opacity=".14"/>
<ellipse cx="302" cy="164" rx="7" ry="3.5" fill="#5e3823"/>
<ellipse cx="303" cy="162.8" rx="4.9" ry="1.8" fill="#8a5230"/>
<ellipse cx="316" cy="162" rx="6" ry="3" fill="#5e3823"/>
<ellipse cx="317" cy="160.8" rx="4.2" ry="1.5" fill="#8a5230"/>
<ellipse cx="330" cy="161" rx="8" ry="4" fill="#5e3823"/>
<ellipse cx="331" cy="159.8" rx="5.6" ry="2.0" fill="#8a5230"/>
<ellipse cx="346" cy="159" rx="7" ry="4" fill="#5e3823"/>
<ellipse cx="347" cy="157.8" rx="4.9" ry="2.0" fill="#8a5230"/>
<ellipse cx="360" cy="158" rx="7" ry="4" fill="#5e3823"/>
<ellipse cx="361" cy="156.8" rx="4.9" ry="2.0" fill="#8a5230"/>
<ellipse cx="376" cy="156" rx="8" ry="4" fill="#5e3823"/>
<ellipse cx="377" cy="154.8" rx="5.6" ry="2.0" fill="#8a5230"/>
<ellipse cx="392" cy="154" rx="7" ry="3.5" fill="#5e3823"/>
<ellipse cx="393" cy="152.8" rx="4.9" ry="1.8" fill="#8a5230"/>
<ellipse cx="404" cy="154" rx="6" ry="3.5" fill="#5e3823"/>
<ellipse cx="405" cy="152.8" rx="4.2" ry="1.8" fill="#8a5230"/>
<ellipse cx="416" cy="155" rx="6" ry="3.5" fill="#5e3823"/>
<ellipse cx="417" cy="153.8" rx="4.2" ry="1.8" fill="#8a5230"/>
<ellipse cx="428" cy="157" rx="6" ry="3.5" fill="#5e3823"/>
<ellipse cx="429" cy="155.8" rx="4.2" ry="1.8" fill="#8a5230"/>
<ellipse cx="438" cy="152" rx="6" ry="3.5" fill="#5e3823"/>
<ellipse cx="439" cy="150.8" rx="4.2" ry="1.8" fill="#8a5230"/>
<ellipse cx="450" cy="150" rx="7" ry="4" fill="#5e3823"/>
<ellipse cx="451" cy="148.8" rx="4.9" ry="2.0" fill="#8a5230"/>
<ellipse cx="462" cy="149" rx="6" ry="4" fill="#5e3823"/>
<ellipse cx="463" cy="147.8" rx="4.2" ry="2.0" fill="#8a5230"/>
<ellipse cx="472" cy="148" rx="5" ry="4" fill="#5e3823"/>
<ellipse cx="473" cy="146.8" rx="3.5" ry="2.0" fill="#8a5230"/>
<ellipse cx="446" cy="158" rx="6" ry="3.5" fill="#5e3823"/>
<ellipse cx="447" cy="156.8" rx="4.2" ry="1.8" fill="#8a5230"/>
<ellipse cx="466" cy="156" rx="5" ry="3" fill="#5e3823"/>
<ellipse cx="467" cy="154.8" rx="3.5" ry="1.5" fill="#8a5230"/>
<ellipse cx="398" cy="163" rx="4" ry="4.5" fill="#5e3823"/>
<ellipse cx="399" cy="161.8" rx="2.8" ry="2.2" fill="#8a5230"/>
<ellipse cx="410" cy="165" rx="3.5" ry="4" fill="#5e3823"/>
<ellipse cx="411" cy="163.8" rx="2.4" ry="2.0" fill="#8a5230"/>
<ellipse cx="434" cy="167" rx="9" ry="4.5" fill="#5e3823"/>
<ellipse cx="435" cy="165.8" rx="6.3" ry="2.2" fill="#8a5230"/>
<path d="M397 181c1-6 6-10 13-10 8 0 14 3 14 9 0 5-2 8-4 10l-1 6h-2l-1-6c-4 1-8 0-11-1-3 1-6 1-8-1-1-3-1-5 0-7z" fill="#6a3d25"/><path d="M402 176c4-4 14-5 20 0-4-1-14-1-20 0z" fill="#a4633a"/>
<path d="M331 178c2-6 8-9 14-9 6 0 9 3 9 8l-2 6h-20z" fill="#6b4128"/>
<path d="M337 186c2-7 9-11 17-11 8 0 13 6 13 14 0 7-3 11-5 14l-1 8h-2l-1-7h-4l-1 7h-2l-1-8c-3 0-6-1-8-3-3 0-6-2-6-6 0-3 1-5 1-8z" fill="url(#pgBis)"/><path d="M342 181c5-5 16-6 22 1-6-2-15-3-22-1z" fill="#a5623a"/><path d="M331 189c3 4 7 5 10 3" stroke="#d8d2c4" stroke-width="1.200" fill="none"/>
<path d="M276 196c0-7 4-12 10-13 6-1 12 1 14 6 1 4 0 7-1 9l-1 5h-2l-1-5c-3 1-6 1-8 0l-3 5c-3 1-6 1-8-1-1-2-1-4 0-6z" fill="url(#pgBis)"/><path d="M282 185c5-3 13-3 17 2-5-1-12-2-17-2z" fill="#9b5c35"/>
<path d="M193 214c0-8 4-14 12-15 8-1 18 0 23 4 3 3 2 6 0 8l-5 2-6 1-8 4-3 4h-4l1-5-3 3h-5z" fill="#6b3d25"/><path d="M199 202c8-4 20-3 27 1-8 0-18 0-27-1z" fill="#955a33"/><ellipse cx="195" cy="219" rx="3" ry="2.500" fill="#2a1c15"/>
<path d="M67 240c2-10 12-18 26-18 12 0 24 2 31 8 3 4 3 12 1 18l-3 10-2 8h-3l-1-10c-6 2-12 2-18 1l-6 6-6 8-5 2c-2-4-1-8 0-12-3 4-7 8-11 10-5 2-8-2-8-8 0-8 2-16 5-23z" fill="url(#pgBis2)"/>
<path d="M76 226c10-5 32-6 46 3-8-2-16-1-24 2-8 3-16 6-22 10 0-5 0-10 0-15z" fill="#8a4f2b" opacity=".8"/>
<ellipse cx="70" cy="262" rx="7.500" ry="12" fill="#17110e"/><path d="M86 258l-2 17M94 258l1 14M112 254l2 18M120 250l3 20" stroke="#1f1511" stroke-width="3.200"/>
<path d="M120 238c2-8 10-14 22-15 14-1 30 0 40 5 7 4 9 12 8 20-1 5-3 8-4 12l-1 11h-3l-3-12c-8 3-18 4-28 3l-4 8-3 10h-4l-2-10c-3 4-6 8-10 12-4 4-10 4-14 0-3-3-4-8-3-13 1-6 4-11 8-15-1-6-1-11 1-16z" fill="url(#pgBis2)"/>
<path d="M126 232c12-8 40-9 58-2-10-1-22 0-34 3-10 3-18 8-24 14 0-5 0-10 0-15z" fill="#6f4327" opacity=".8"/>
<ellipse cx="117" cy="273" rx="8.500" ry="12" fill="#15100d" transform="rotate(12 117 273)"/><path d="M111 262c3 1 6 3 7 6" stroke="#ddd6c6" stroke-width="1.400" fill="none"/><path d="M146 262l-1 18M154 262l2 16M178 254l1 18M186 250l2 20" stroke="#2a1a12" stroke-width="3.200"/>
<path d="M247 226c3-10 14-18 28-20 16-2 36-2 48 4 7 4 8 14 7 22l-2 8c-2-2-3-4-4-6-1 5-4 10-8 14l-4 14h-3l-1-16c-8 2-18 3-28 2l-3 8-2 8h-4l-2-10c-4 1-8 1-12 0l-6 6c-4 3-9 2-11-2-3-5-3-12-1-18 1-5 4-10 8-14z" fill="url(#pgBis2)"/>
<path d="M254 216c14-10 46-12 68-4-14-1-28 1-40 5-12 4-22 10-30 17 0-6 0-12 2-18z" fill="#6f4327" opacity=".8"/>
<ellipse cx="247" cy="244" rx="8" ry="13" fill="#120e0c"/><path d="M241 232c3 0 6 2 7 5" stroke="#ddd6c6" stroke-width="1.500" fill="none"/><path d="M262 246l-1 16M272 248l1 14M306 244l-3 18M316 240l2 18" stroke="#2a1a12" stroke-width="3.200"/>
<path d="M33 206c10 1 24-1 40-5" stroke="#5f6e60" stroke-width="3" fill="none" opacity=".7"/>
</svg>
</div>
<svg class="abs" style="left:35.5px;top:218.2px" width="93.4" height="38.3" viewBox="-1 -1 93.4 38.3"><rect x="0.85" y="0.85" width="89.7" height="34.6" rx="17.3" fill="none" stroke="#e2452a" stroke-width="1.7"/></svg>
<div class="abs" style="left:48.6px;top:231.2px;width:12.600px;height:12.600px;border-radius:50%;background:#f03a17"></div>
<span class="abs" style="left:67.5px;top:225.6px;font:bold 23.7px/23.7px 'Liberation Sans',sans-serif;letter-spacing:-0.00px;color:#e63a1e;white-space:nowrap;-webkit-text-stroke:0.5px #e63a1e">Live</span>
<div class="abs" style="left:47.2px;top:475px;width:2px;height:21px;background:#f4f4f0"></div>
<div class="abs" style="left:56.2px;top:475px;width:2px;height:21px;background:#f4f4f0"></div>
<svg class="abs" style="left:460.70000000000005px;top:471px" width="28" height="28" viewBox="0 0 28 28"><g fill="none" stroke="#f4f4f0" stroke-width="1.600"><path d="M16 12L26 2M18.500 2H26v7.500M12 16L2 26M2 18.500V26h7.500"/></g></svg>
<span class="abs" style="left:21.7px;top:534.9px;font:bold 22px/22px 'Liberation Sans',sans-serif;letter-spacing:-0.12px;color:#5a1518;white-space:nowrap;-webkit-text-stroke:0.5px #5a1518">Wildlife Detected</span>
<svg class="abs" style="left:200.7px;top:533.5px" width="24" height="22" viewBox="0 0 24 22"><g fill="#e0452a"><path d="M15.200 3.200c.9 4.700 2.400 6.200 7.300 7.300-4.900 1.100-6.400 2.600-7.300 7.300-.9-4.700-2.400-6.200-7.300-7.300 4.900-1.100 6.400-2.600 7.300-7.300z"/><path d="M5.600 0c.5 2.600 1.300 3.400 4 4-2.700.6-3.500 1.400-4 4-.5-2.600-1.300-3.400-4-4 2.700-.6 3.500-1.400 4-4z"/><path d="M5.600 12.800c.5 2.600 1.300 3.400 4 4-2.700.6-3.500 1.400-4 4-.5-2.600-1.300-3.400-4-4 2.700-.6 3.500-1.400 4-4z"/></g></svg>
<div class="abs" style="left:21.1px;top:565.8px;width:480px;height:208px;border-radius:29px;background:#e5482d"></div>
<div class="abs" style="left:21.1px;top:615.3px;width:480px;height:1.500px;background:#f4a28f"></div>
<span class="abs" style="left:38.8px;top:578.3px;font:bold 26.6px/26.6px 'Liberation Sans',sans-serif;letter-spacing:-0.46px;color:#5a1518;white-space:nowrap;-webkit-text-stroke:0.5px #5a1518">American Buffalo or Bison</span>
<svg class="abs" style="left:466.4px;top:583.2px" width="18" height="18" viewBox="0 0 18 18"><path d="M1 1l16 16M17 1L1 17" stroke="#fbe3dc" stroke-width="1.600"/></svg>
<span class="abs" style="left:37.8px;top:629.8px;font:normal 21.3px/21.3px 'Liberation Sans',sans-serif;letter-spacing:0.75px;color:#5a1518;white-space:nowrap;-webkit-text-stroke:0.45px #5a1518">Last activity:</span>
<span class="abs" style="left:260.4px;top:629.8px;font:normal 21.3px/21.3px 'Liberation Sans',sans-serif;letter-spacing:0.62px;color:#5a1518;white-space:nowrap;-webkit-text-stroke:0.45px #5a1518">Population:</span>
<span class="abs" style="left:38.8px;top:656.3px;font:bold 28.8px/28.8px 'Liberation Sans',sans-serif;letter-spacing:-0.68px;color:#5a1518;white-space:nowrap;-webkit-text-stroke:0.5px #5a1518">8:22 AM</span>
<span class="abs" style="left:261.4px;top:656.3px;font:bold 28.8px/28.8px 'Liberation Sans',sans-serif;letter-spacing:-0.49px;color:#5a1518;white-space:nowrap;-webkit-text-stroke:0.5px #5a1518">4,000</span>
<span class="abs" style="left:37.8px;top:700.4px;font:normal 21.3px/21.3px 'Liberation Sans',sans-serif;letter-spacing:0.50px;color:#5a1518;white-space:nowrap;-webkit-text-stroke:0.45px #5a1518">Current behavior:</span>
<span class="abs" style="left:260.4px;top:700.4px;font:normal 21.3px/21.3px 'Liberation Sans',sans-serif;letter-spacing:0.75px;color:#5a1518;white-space:nowrap;-webkit-text-stroke:0.45px #5a1518">Migration:</span>
<span class="abs" style="left:38.8px;top:727.0px;font:bold 28.8px/28.8px 'Liberation Sans',sans-serif;letter-spacing:-0.22px;color:#5a1518;white-space:nowrap;-webkit-text-stroke:0.5px #5a1518">Grazing</span>
<span class="abs" style="left:261.4px;top:727.0px;font:bold 28.8px/28.8px 'Liberation Sans',sans-serif;letter-spacing:-0.05px;color:#5a1518;white-space:nowrap;-webkit-text-stroke:0.5px #5a1518">Northbound</span>
<svg class="abs" style="left:20.1px;top:785.8px" width="340.0" height="52.4" viewBox="-1 -1 340.0 52.4"><rect x="0.85" y="0.85" width="336.3" height="48.7" rx="24.3" fill="none" stroke="#5a1518" stroke-width="1.7"/></svg>
<span class="abs" style="left:38.8px;top:798.5px;font:bold 27.6px/27.6px 'Liberation Sans',sans-serif;letter-spacing:-0.45px;color:#5a1518;white-space:nowrap;-webkit-text-stroke:0.5px #5a1518">Western Meadowlark</span>
<svg class="abs" style="left:318.70000000000005px;top:800px" width="24" height="24" viewBox="0 0 24 24"><path d="M12 .5v23M.5 12h23" stroke="#5a1518" stroke-width="1.400"/></svg>
<div class="abs" style="left:469.3px;top:794.8px;width:38px;height:42.500px;border-radius:4px;background:#1e1e1e;box-shadow:0 1px 4px rgba(0,0,0,.45)"></div>
<svg class="abs" style="left:481.2px;top:809px" width="15" height="15" viewBox="0 0 15 14"><g fill="none" stroke="#c8c8c8" stroke-width="1.200"><rect x=".8" y=".8" width="5.400" height="12.400" rx="1"/><rect x="9" y=".8" width="5" height="4.600" rx="1"/><rect x="9" y="8.600" width="5" height="4.600" rx="1"/></g></svg>
<div class="abs" style="left:516px;top:0;width:6px;height:855px;background:#e3e3df"></div>
<div class="abs" style="left:520px;top:0;width:2px;height:855px;background:#efefeb"></div>
<div class="abs" style="left:0;top:0;width:522px;height:2.500px;background:#ebe9e5"></div>
<div class="abs" style="left:0;top:848px;width:522px;height:6px;background:#ecebe7"></div>
</div>
</div>
<div id="status">
 <svg style="left:11px;top:3px" width="16" height="14" viewBox="0 0 16 14"><path d="M1.800 5l4 3.700-4 3.600M11.800 .8l-4 3.700 4 3.700" fill="none" stroke="#ccc" stroke-width="1.250" transform="translate(0 0)"/></svg>
 <svg style="left:43.500px;top:2px" width="15" height="15" viewBox="0 0 15 15"><circle cx="7.500" cy="7.500" r="6.500" fill="none" stroke="#ccc" stroke-width="1.100"/><path d="M4.900 4.900l5.200 5.200M10.100 4.900l-5.200 5.200" stroke="#ccc" stroke-width="1.100"/></svg>
 <span style="left:62.500px;top:2px;line-height:15px">0</span>
 <svg style="left:74px;top:1px" width="16" height="15" viewBox="0 0 16 15"><path d="M8 1.500L15 14H1z" fill="none" stroke="#ccc" stroke-width="1.100" stroke-linejoin="round"/><path d="M8 6v4.300" stroke="#ccc" stroke-width="1.200"/><circle cx="8" cy="12" r=".75" fill="#ccc"/></svg>
 <span style="left:94.500px;top:2px;line-height:15px">0</span>
 <!-- copilot -->
 <svg style="left:1507px;top:1px" width="17" height="16" viewBox="0 0 17 16"><g fill="none" stroke="#e4e4e4" stroke-width="1.600" stroke-linejoin="round"><path d="M3.300 6.200C3.300 3.200 4.700 1.600 6.300 1.600c1.500 0 2.200 1.200 2.200 2.800 0-1.600.7-2.800 2.200-2.800 1.600 0 3 1.600 3 4.600"/><path d="M1.300 8.300c0-1.200.9-2.100 2-2.100h10.400c1.100 0 2 .9 2 2.100v2.400c-1.600 2.200-4.300 3.600-7.200 3.600s-5.600-1.400-7.200-3.600z"/></g><path d="M6.300 9v2.300M10.700 9v2.300" stroke="#e4e4e4" stroke-width="1.700" stroke-linecap="round"/></svg>
 <svg style="left:1541px;top:.5px" width="15" height="17" viewBox="0 0 15 17"><path d="M7.500 1.500a4.500 4.500 0 0 0-4.500 4.500v4L1.300 12.800h12.400L12 10V6a4.500 4.500 0 0 0-4.500-4.500z" fill="none" stroke="#d8d8d8" stroke-width="1.300" stroke-linejoin="round"/><path d="M5.800 14.300a1.800 1.800 0 0 0 3.400 0" fill="none" stroke="#d8d8d8" stroke-width="1.300"/></svg>
</div>
</div><!-- /win -->
<div id="winborder"></div>
</div><!-- /screen -->
</body>
</html>
